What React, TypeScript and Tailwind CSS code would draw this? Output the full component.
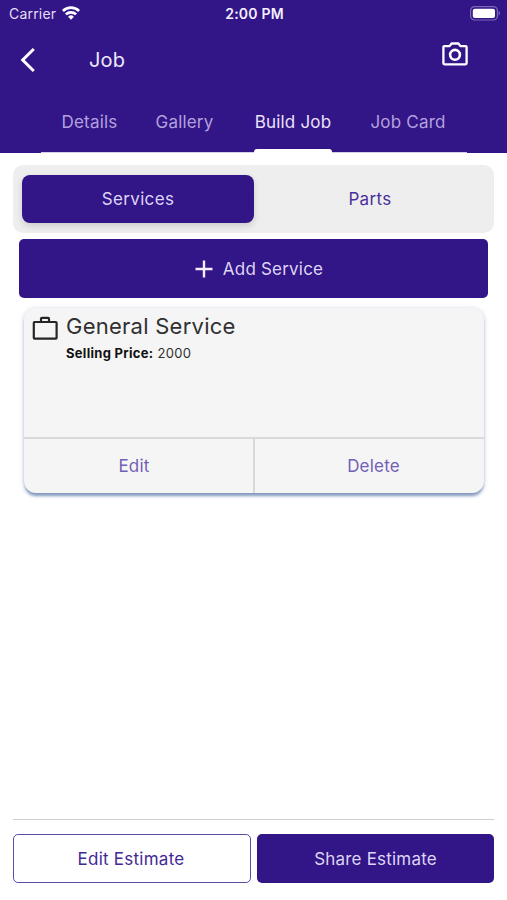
import type { ReactNode } from "react";

function WifiIcon() {
  return (
    <svg width="18" height="14" viewBox="0 0 18 14" fill="none" stroke="#fff" strokeWidth="2.7">
      <path d="M0.9 5a11.6 11.6 0 0 1 16.2 0" />
      <path d="M3.9 8.4a7.3 7.3 0 0 1 10.2 0" />
      <path d="M9 13.8l-2.9-3.1a4.2 4.2 0 0 1 5.8 0z" fill="#fff" stroke="none" />
    </svg>
  );
}

function BatteryIcon() {
  return (
    <svg width="31" height="15" viewBox="0 0 31 15">
      <rect x="0.6" y="0.6" width="26.8" height="13.4" rx="4" fill="none" stroke="#7c69b6" strokeWidth="1.2" />
      <rect x="2.8" y="2.7" width="22.2" height="9.4" rx="2" fill="#fff" />
      <path d="M28.6 5v4.6c1.8-.6 1.8-4 0-4.6z" fill="#7c69b6" />
    </svg>
  );
}

function CameraIcon() {
  return (
    <svg width="26" height="24" viewBox="0 0 26 24" fill="none" stroke="#fff" strokeWidth="2.3" strokeLinejoin="round">
      <path d="M2.4 4.1h5.2l2-2.6h6.8l2 2.6h5.2a1 1 0 0 1 1 1v16.2a1 1 0 0 1-1 1H2.4a1 1 0 0 1-1-1V5.1a1 1 0 0 1 1-1z" />
      <circle cx="13" cy="12.8" r="4.9" strokeWidth="2.6" />
    </svg>
  );
}

function BriefcaseIcon() {
  return (
    <svg width="26" height="24" viewBox="0 0 26 24" fill="none" stroke="#262626" strokeWidth="2.2" strokeLinejoin="round">
      <rect x="1.8" y="6" width="22.8" height="16.6" rx="0.8" />
      <path d="M9 6V2.8a1 1 0 0 1 1-1h6a1 1 0 0 1 1 1V6" />
    </svg>
  );
}

function Tab({ children, active = false, className }: { children: ReactNode; active?: boolean; className: string }) {
  return (
    <button className={`flex flex-col items-center justify-between whitespace-nowrap ${className} ${active ? "text-[#eae2fb]" : "text-[#b3a1de]"}`}>
      <span className="leading-6">{children}</span>
      {active && <span className="h-1 w-full rounded-t-[3px] bg-white" />}
    </button>
  );
}

export default function App() {
  return (
    <div className="flex h-[900px] w-[507px] flex-col overflow-hidden bg-white font-['Inter',sans-serif] text-[17px] tracking-[0.2px]">
      <header className="flex h-[153px] shrink-0 flex-col bg-[#321586] text-white">
        <div className="grid h-[26px] grid-cols-3 items-center pl-[9px] pr-[6px] text-[14px] tracking-[0.2px]">
          <div className="flex items-center gap-[6px] text-[#e6dff5]">
            <span>Carrier</span>
            <WifiIcon />
          </div>
          <span className="pr-[1px] text-center font-semibold text-[#f4efff]">2:00 PM</span>
          <div className="flex justify-end">
            <BatteryIcon />
          </div>
        </div>
        <div className="mt-[2px] flex h-[64px] items-center pl-5 pr-[39px]">
          <svg width="16" height="26" viewBox="0 0 16 26" fill="none" stroke="#fff" strokeWidth="3">
            <path d="M13.8 2L2.7 13l11.1 11" />
          </svg>
          <h1 className="ml-[53px] text-[20px] font-normal leading-7 text-[#eee8fb]">Job</h1>
          <div className="mb-3 ml-auto">
            <CameraIcon />
          </div>
        </div>
        <nav className="ml-[41px] flex h-[61px] w-[426px] border-b border-[#d6cfe9] pt-[18px]">
          <Tab className="ml-[14px] w-[69px]">Details</Tab>
          <Tab className="ml-[26px] w-[69px]">Gallery</Tab>
          <Tab active className="-mb-[1px] ml-[35px] w-[78px]">Build Job</Tab>
          <Tab className="ml-[37px] w-[78px]">Job Card</Tab>
        </nav>
      </header>

      <main className="flex flex-1 flex-col px-[13px] pt-3">
        <div className="flex h-[68px] rounded-[10px] bg-[#eeeeee] pb-[10px] pl-[9px] pr-2 pt-[10px]">
          <button className="w-[232px] rounded-[8px] bg-[#321586] pt-[2px] tracking-[0.35px] text-[#ded4f7] shadow-[0_3px_7px_rgba(0,0,0,0.14)]">Services</button>
          <button className="flex-1 pt-[2px] tracking-[0.35px] text-[#4a309a]">Parts</button>
        </div>
        <button className="mx-[6px] mt-[6px] flex h-[59px] items-center justify-center gap-[10px] rounded-[5px] bg-[#321586] pl-[11px] text-[#ded4f7]">
          <svg width="18" height="18" viewBox="0 0 18 18" stroke="#f3edff" strokeWidth="2.4">
            <path d="M9 0.5v17M0.5 9h17" />
          </svg>
          <span className="pt-[2px]">Add Service</span>
        </button>

        <section className="ml-[11px] mt-[10px] flex h-[185px] w-[460px] flex-col rounded-[12px] bg-[#f5f5f5] shadow-[0_4px_3px_-1px_rgba(75,105,160,0.6),0_1px_5px_rgba(90,105,170,0.35)]">
          <div className="flex flex-1 gap-2 pl-2 pt-2">
            <BriefcaseIcon />
            <div className="-mt-1">
              <h2 className="text-[22px] font-normal leading-7 tracking-[0.25px] text-[#303030]">General Service</h2>
              <p className="mt-[3px] text-[13px] leading-5 tracking-[0.3px] text-[#303030]">
                <b className="font-bold text-[#111]">Selling Price:</b> 2000
              </p>
            </div>
          </div>
          <div className="flex h-[56px] border-t-2 border-[#d9d9db] text-[#7260b8]">
            <button className="w-[231px] border-r-2 border-[#d9d9db] pr-[9px] pt-[1px]">Edit</button>
            <button className="flex-1 pl-[8px] pt-[1px]">Delete</button>
          </div>
        </section>

        <footer className="mb-[17px] mt-auto flex gap-[6px] border-t border-[#cfcfd3] pt-[14px]">
          <button className="h-[49px] w-[238px] rounded-[5px] border-[1.5px] border-[#5f4aa5] pr-[2px] pt-[2px] tracking-[0.25px] text-[#442995]">Edit Estimate</button>
          <button className="h-[49px] flex-1 rounded-[5px] bg-[#321586] pt-[2px] text-[#ded4f7]">Share Estimate</button>
        </footer>
      </main>
    </div>
  );
}
